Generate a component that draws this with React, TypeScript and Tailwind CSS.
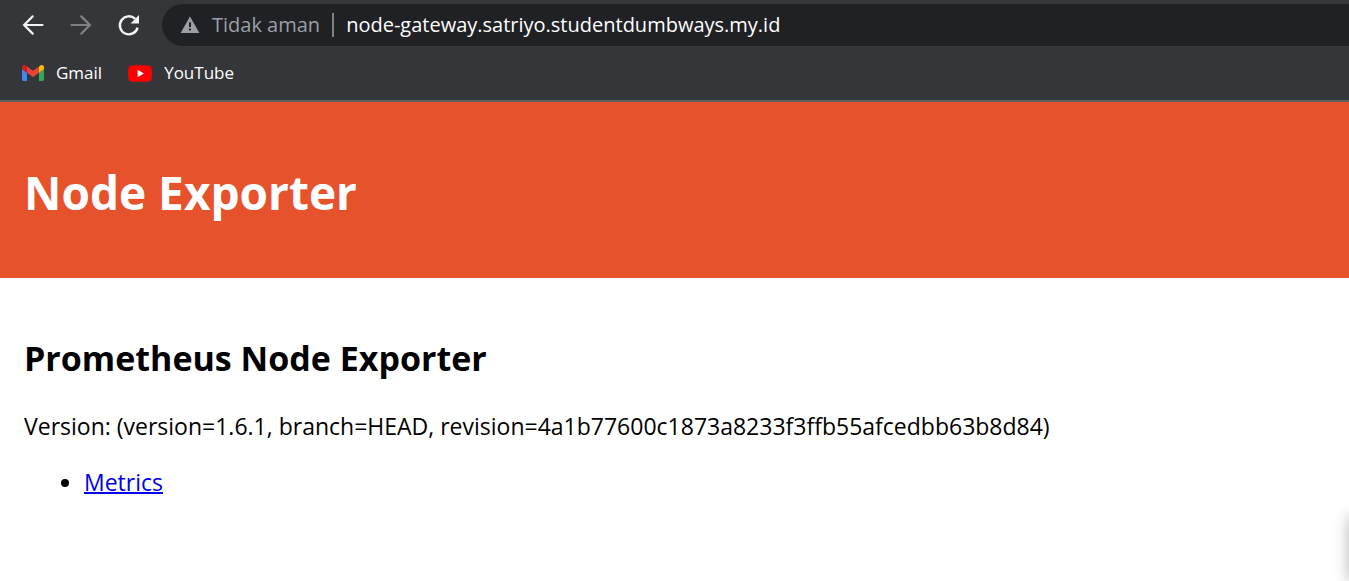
import React from "react";

function BackIcon() {
  return (
    <svg viewBox="0 0 24 24" className="size-6" fill="none" stroke="currentColor" strokeWidth="2.2" strokeLinecap="round" aria-hidden="true">
      <path d="M21.5 12H3.4M11.7 3.4 3.1 12l8.6 8.6" />
    </svg>
  );
}

function ForwardIcon() {
  return (
    <svg viewBox="0 0 24 24" className="size-6" fill="none" stroke="currentColor" strokeWidth="2.2" strokeLinecap="round" aria-hidden="true">
      <path d="M2.5 12h18.1M12.3 3.4l8.6 8.6-8.6 8.6" />
    </svg>
  );
}

function ReloadIcon() {
  return (
    <svg viewBox="0 0 24 24" className="size-6" aria-hidden="true">
      <path d="M20.6 14.6A9 9 0 1 1 18.2 5.9" fill="none" stroke="currentColor" strokeWidth="2.4" />
      <path d="M22 2v8.4h-8.4z" fill="currentColor" />
    </svg>
  );
}

function WarningIcon() {
  return (
    <svg viewBox="0 0 20 20" className="size-5" aria-hidden="true">
      <path d="M10 1.5 19.4 18H.6z" fill="#9aa0a6" />
      <path d="M9 7.3h2v4.7H9zM9 13.4h2v2.1H9z" fill="#202124" />
    </svg>
  );
}

function GmailIcon() {
  return (
    <svg viewBox="52 42 88 66" className="h-4 w-[22px]" preserveAspectRatio="none" aria-hidden="true">
      <path fill="#4285f4" d="M58 108h14V74L52 59v43c0 3.3 2.7 6 6 6" />
      <path fill="#34a853" d="M120 108h14c3.3 0 6-2.7 6-6V59l-20 15" />
      <path fill="#fbbc04" d="M120 48v26l20-15v-8c0-7.4-8.5-11.6-14.4-7.2" />
      <path fill="#ea4335" d="M72 74V48l24 18 24-18v26L96 92" />
      <path fill="#c5221f" d="M52 51v8l20 15V48l-5.600-4.200C60.500 39.400 52 43.600 52 51" />
    </svg>
  );
}

function YouTubeIcon() {
  return (
    <svg viewBox="0 0 24 17" className="h-[17px] w-6" aria-hidden="true">
      <path fill="#f00" d="M3.2.6C8 .1 16 .1 20.8.6c1.600.2 2.500 1.100 2.700 2.700.5 3.400.5 7 0 10.400-.2 1.600-1.100 2.500-2.700 2.700-4.800.5-12.800.5-17.600 0C1.600 16.200.7 15.300.5 13.700 0 10.300 0 6.700.5 3.300.7 1.700 1.600.8 3.200.6" />
      <path fill="#fff" d="M9.600 4.800 15.900 8.500 9.600 12.200z" />
    </svg>
  );
}

function BrowserBar() {
  return (
    <div className="border-b-2 border-[#5f6064] bg-[#35363a]">
      <div className="flex h-[50px] items-center pl-[21px]">
        <nav aria-label="History" className="flex items-center gap-6 pr-[21px] text-[#f1f3f4]">
          <button type="button" aria-label="Back"><BackIcon /></button>
          <button type="button" aria-label="Forward" disabled className="text-[#808185]"><ForwardIcon /></button>
          <button type="button" aria-label="Reload"><ReloadIcon /></button>
        </nav>
        <div className="flex h-[42px] min-w-0 flex-1 items-center rounded-l-full bg-[#202124] pl-[18px] text-xl">
          <button type="button" className="flex items-center gap-3 whitespace-nowrap text-[#9aa0a6]">
            <WarningIcon />
            Tidak aman
          </button>
          <span className="mx-3 h-6 w-0.5 bg-[#808185]" />
          <input
            type="text"
            aria-label="Address"
            defaultValue="node-gateway.satriyo.studentdumbways.my.id"
            className="min-w-0 flex-1 bg-transparent text-white outline-none"
          />
        </div>
      </div>
      <nav aria-label="Bookmarks" className="flex h-[50px] items-center gap-[26px] px-[22px] pb-1 text-[17px] text-white">
        <a href="#gmail" className="flex items-center gap-3"><GmailIcon />Gmail</a>
        <a href="#youtube" className="flex items-center gap-3"><YouTubeIcon />YouTube</a>
      </nav>
    </div>
  );
}

export default function App() {
  return (
    <div className="relative flex min-h-screen flex-col overflow-hidden bg-white font-['Open_Sans','Noto_Sans',sans-serif] text-black">
      <BrowserBar />
      <header className="bg-[#e6522c] px-6 pt-[58px] pb-[54px] text-white">
        <h1 className="text-[46px] leading-16 font-bold">Node Exporter</h1>
      </header>
      <main className="flex flex-col gap-6 px-6 pt-14 pb-6 text-[23px] leading-8">
        <h2 className="pb-1 text-[34px] leading-12 font-bold">Prometheus Node Exporter</h2>
        <p>Version: (version=1.6.1, branch=HEAD, revision=4a1b77600c1873a8233f3ffb55afcedbb63b8d84)</p>
        <ul className="list-disc pl-[60px]">
          <li><a href="#metrics" className="text-[#0000ee] underline decoration-2">Metrics</a></li>
        </ul>
      </main>
      <div aria-hidden="true" className="absolute -right-4 bottom-0 h-16 w-4 shadow-[0_0_16px_rgba(0,0,0,0.3)]" />
    </div>
  );
}
